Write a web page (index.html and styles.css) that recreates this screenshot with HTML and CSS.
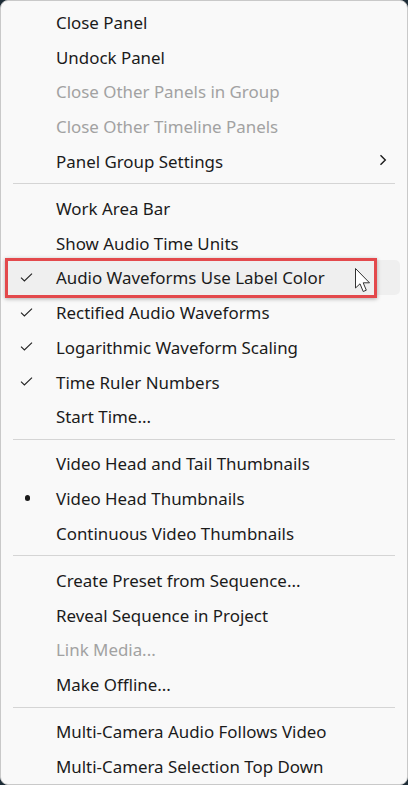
FILE: index.html
```html
<!DOCTYPE html>
<html>
<head>
<meta charset="utf-8">
<link rel="stylesheet" href="styles.css">
</head>
<body>
<div class="menu">
  <div class="item"><span class="mark"></span><span class="label">Close Panel</span></div>
  <div class="item"><span class="mark"></span><span class="label">Undock Panel</span></div>
  <div class="item disabled"><span class="mark"></span><span class="label">Close Other Panels in Group</span></div>
  <div class="item disabled"><span class="mark"></span><span class="label">Close Other Timeline Panels</span></div>
  <div class="item"><span class="mark"></span><span class="label">Panel Group Settings</span>
    <svg class="chev" width="8" height="12" viewBox="0 0 8 12"><path d="M1.5 1.2 L6.3 6 L1.5 10.8" fill="none" stroke="#1b1b1b" stroke-width="1.4"/></svg>
  </div>
  <div class="sep"></div>
  <div class="item"><span class="mark"></span><span class="label">Work Area Bar</span></div>
  <div class="item"><span class="mark"></span><span class="label">Show Audio Time Units</span></div>
  <div class="item hover"><span class="mark"><svg width="13" height="9" viewBox="0 0 13 9"><path d="M1 4.6 L4.4 8 L12 0.6" fill="none" stroke="#222" stroke-width="1.1"/></svg></span><span class="label">Audio Waveforms Use Label Color</span>
    <div class="annot"></div>
    <svg class="cursor" width="20" height="30" viewBox="0 0 20 30"><path d="M1.5 1.5 L1.5 21 L6 16.8 L9.2 24.5 L12.3 23.2 L9.2 15.8 L15.5 15.8 Z" fill="#fff" stroke="#333" stroke-width="1" stroke-linejoin="round"/></svg>
  </div>
  <div class="item"><span class="mark"><svg width="13" height="9" viewBox="0 0 13 9"><path d="M1 4.6 L4.4 8 L12 0.6" fill="none" stroke="#222" stroke-width="1.1"/></svg></span><span class="label">Rectified Audio Waveforms</span></div>
  <div class="item"><span class="mark"><svg width="13" height="9" viewBox="0 0 13 9"><path d="M1 4.6 L4.4 8 L12 0.6" fill="none" stroke="#222" stroke-width="1.1"/></svg></span><span class="label">Logarithmic Waveform Scaling</span></div>
  <div class="item"><span class="mark"><svg width="13" height="9" viewBox="0 0 13 9"><path d="M1 4.6 L4.4 8 L12 0.6" fill="none" stroke="#222" stroke-width="1.1"/></svg></span><span class="label">Time Ruler Numbers</span></div>
  <div class="item"><span class="mark"></span><span class="label">Start Time...</span></div>
  <div class="sep"></div>
  <div class="item"><span class="mark"></span><span class="label">Video Head and Tail Thumbnails</span></div>
  <div class="item"><span class="mark"><span class="dot"></span></span><span class="label">Video Head Thumbnails</span></div>
  <div class="item"><span class="mark"></span><span class="label">Continuous Video Thumbnails</span></div>
  <div class="sep"></div>
  <div class="item"><span class="mark"></span><span class="label">Create Preset from Sequence...</span></div>
  <div class="item"><span class="mark"></span><span class="label">Reveal Sequence in Project</span></div>
  <div class="item disabled"><span class="mark"></span><span class="label">Link Media...</span></div>
  <div class="item"><span class="mark"></span><span class="label">Make Offline...</span></div>
  <div class="sep"></div>
  <div class="item"><span class="mark"></span><span class="label">Multi-Camera Audio Follows Video</span></div>
  <div class="item"><span class="mark"></span><span class="label">Multi-Camera Selection Top Down</span></div>
</div>
</body>
</html>
```

FILE: styles.css
```css
html, body {
  margin: 0;
  padding: 0;
  background: #1d2c36;
}
body {
  width: 408px;
  height: 785px;
  overflow: hidden;
}
.menu {
  box-sizing: border-box;
  width: 408px;
  height: 785px;
  background: #f9f9f9;
  border: 1px solid #c9c9c9;
  border-radius: 8px;
  padding-top: 3.6px;
  font-family: "Noto Sans", "Open Sans", sans-serif;
  font-size: 16.9px;
  color: #1b1b1b;
  position: relative;
}
.item {
  position: relative;
  display: flex;
  align-items: center;
  height: 34.75px;
  margin: 0 7px 0 4px;
  border-radius: 5px;
}
.item.disabled {
  color: #a2a2a2;
}
.item.hover {
  background: #efefef;
}
.mark {
  width: 51px;
  flex: none;
  display: flex;
  align-items: center;
  padding-left: 15px;
  box-sizing: border-box;
}
.label {
  flex: 1;
  white-space: nowrap;
  padding-top: 1px;
}
.dot {
  display: block;
  width: 5.5px;
  height: 5.5px;
  border-radius: 50%;
  background: #1b1b1b;
  margin-left: 4.5px;
}
.chev {
  margin-right: 13px;
  margin-top: -1px;
}
.sep {
  height: 1px;
  background: #d5d5d5;
  margin: 5px 12px 6.25px 12px;
}
.annot {
  position: absolute;
  left: -0.5px;
  top: -2.5px;
  width: 366px;
  height: 34px;
  border: 3px solid #e3494c;
  box-shadow: 0 1px 4px rgba(0,0,0,0.3);
  pointer-events: none;
}
.cursor {
  position: absolute;
  left: 349px;
  top: 7px;
}
```
